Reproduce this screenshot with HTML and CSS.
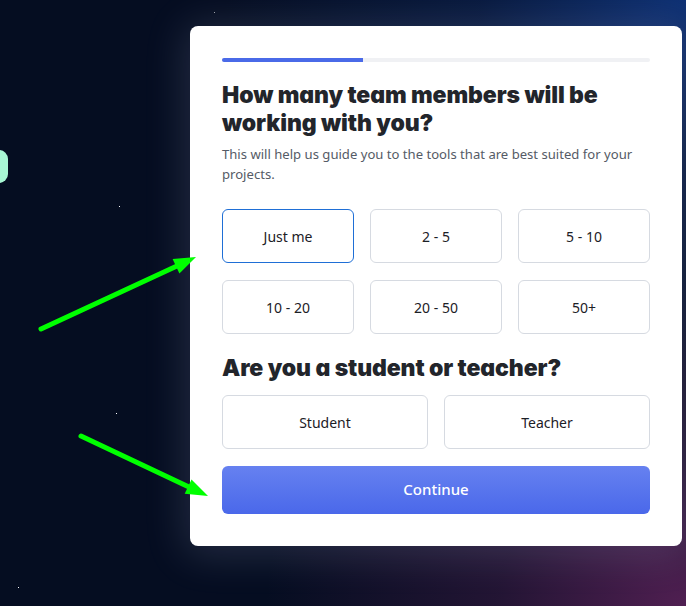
FILE: index.html
```html
<!DOCTYPE html>
<html lang="en">
<head>
<meta charset="utf-8">
<title>Team size</title>
<link rel="stylesheet" href="styles.css">
</head>
<body>
<div class="pill"></div>
<span class="star s1"></span>
<span class="star s2"></span>
<span class="star s3"></span>
<span class="star s4"></span>
<main class="card">
  <div class="progress"><div class="progress-fill" style="width:33%"></div></div>
  <h1 class="title">How many team members will be working with you?</h1>
  <p class="subtitle">This will help us guide you to the tools that are best suited for your projects.</p>
  <div class="grid grid-3">
    <button class="option selected">Just me</button>
    <button class="option">2 - 5</button>
    <button class="option">5 - 10</button>
    <button class="option">10 - 20</button>
    <button class="option">20 - 50</button>
    <button class="option">50+</button>
  </div>
  <h2 class="title title-2">Are you a student or teacher?</h2>
  <div class="grid grid-2">
    <button class="option">Student</button>
    <button class="option">Teacher</button>
  </div>
  <button class="continue">Continue</button>
</main>
<svg class="arrows" width="686" height="606" viewBox="0 0 686 606">
  <g stroke="#00ff00" stroke-width="5" stroke-linecap="round" fill="#00ff00">
    <line x1="41" y1="329" x2="178" y2="265.5"/>
    <polygon stroke="none" points="196,257 179.4,273.5 172.6,258.9"/>
    <line x1="81" y1="436" x2="190" y2="487.5"/>
    <polygon stroke="none" points="208,496 184.7,493.8 191.5,479.4"/>
  </g>
</svg>
</body>
</html>
```

FILE: styles.css
```css
* { box-sizing: border-box; }

html, body {
  margin: 0;
  width: 686px;
  height: 606px;
  overflow: hidden;
}

body {
  position: relative;
  font-family: "Noto Sans", "Open Sans", sans-serif;
  background:
    radial-gradient(ellipse 460px 380px at 100% 0%, rgba(14, 50, 120, 0.95) 0%, rgba(10, 36, 90, 0.5) 45%, rgba(5, 13, 32, 0) 100%),
    radial-gradient(ellipse 420px 330px at 100% 100%, rgba(84, 32, 84, 0.95) 0%, rgba(64, 28, 70, 0.5) 45%, rgba(5, 13, 32, 0) 100%),
    #050d21;
  padding: 26px 0 0 190px;
}

.pill {
  position: absolute;
  left: -30px;
  top: 150px;
  width: 38px;
  height: 33px;
  border-radius: 9px;
  background: #a8f6d4;
}

.star {
  position: absolute;
  width: 1px;
  height: 1px;
  background: #ffffff;
}
.s1 { left: 119px; top: 206px; }
.s2 { left: 116px; top: 413px; }
.s3 { left: 18px; top: 587px; }
.s4 { left: 214px; top: 12px; opacity: 0.6; }

.card {
  width: 492px;
  height: 520px;
  background: #ffffff;
  border-radius: 8px;
  padding: 32px;
  box-shadow: 0 4px 40px 6px rgba(190, 200, 235, 0.16);
  display: flex;
  flex-direction: column;
}

.progress {
  height: 4px;
  border-radius: 2px;
  background: #f0f1f4;
  overflow: hidden;
}
.progress-fill {
  height: 100%;
  background: #4a6ae8;
}

.title {
  margin: 19px 0 0;
  font-family: "Inter", sans-serif;
  font-feature-settings: "cv11" 1;
  font-weight: 900;
  font-size: 23px;
  line-height: 28px;
  letter-spacing: -0.1px;
  color: #22252b;
}

.title-2 {
  margin-top: 20px;
}

.subtitle {
  margin: 7px 0 0;
  font-size: 13.1px;
  line-height: 20px;
  color: #555b66;
}

.grid {
  display: grid;
  column-gap: 16px;
  row-gap: 17px;
}
.grid-3 {
  grid-template-columns: repeat(3, 1fr);
  margin-top: 25px;
}
.grid-2 {
  grid-template-columns: repeat(2, 1fr);
  margin-top: 13px;
}

.option {
  height: 54px;
  border: 1px solid #d6dae1;
  border-radius: 6px;
  background: #ffffff;
  font-family: "Noto Sans", "Open Sans", sans-serif;
  font-size: 14px;
  color: #1c2026;
  padding: 0;
}
.option.selected {
  border-color: #1f6fd6;
}

.continue {
  margin-top: 17px;
  height: 48px;
  border: 0;
  border-radius: 6px;
  background: linear-gradient(180deg, #6681f0 0%, #4a68ea 100%);
  color: #ffffff;
  font-family: "Noto Sans", "Open Sans", sans-serif;
  font-size: 15px;
  font-weight: 500;
  padding: 0 0 2px;
}

.arrows {
  position: absolute;
  left: 0;
  top: 0;
  pointer-events: none;
}
```
